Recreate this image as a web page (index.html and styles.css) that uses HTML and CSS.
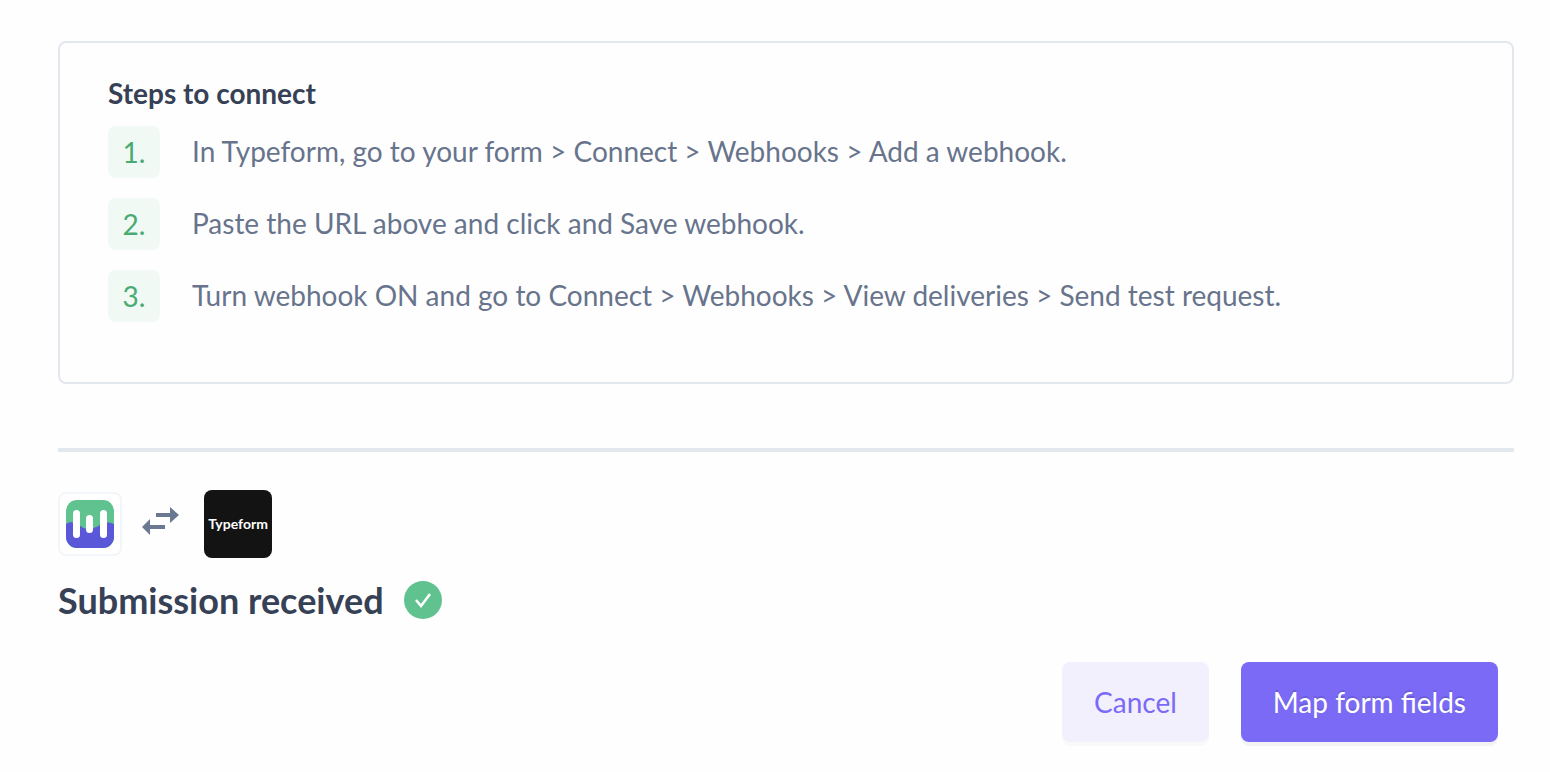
FILE: index.html
```html
<!DOCTYPE html>
<html lang="en">
<head>
	<meta charset="UTF-8">
	<meta name="viewport" content="width=device-width, initial-scale=1.0">
	<title>Connect Typeform</title>
	<link rel="stylesheet" href="styles.css">
</head>
<body>
	<main class="connect">
		<section class="card">
			<h2>Steps to connect</h2>
			<ol class="steps">
				<li><span class="num">1.</span><p>In Typeform, go to your form &gt; Connect &gt; Webhooks &gt; Add a webhook.</p></li>
				<li><span class="num">2.</span><p>Paste the URL above and click and Save webhook.</p></li>
				<li><span class="num">3.</span><p>Turn webhook ON and go to Connect &gt; Webhooks &gt; View deliveries &gt; Send test request.</p></li>
			</ol>
		</section>
		<hr>
		<div class="apps">
			<div class="app">
				<svg width="48" height="48" viewBox="0 0 48 48">
					<clipPath id="logoClip"><rect width="48" height="48" rx="11"/></clipPath>
					<g clip-path="url(#logoClip)">
						<rect width="48" height="48" fill="#5fc28f"/>
						<path d="M0 24C3 22 6 22 9 23C14 25 17 29 22 29C30 29 34 24 39 23C42 22 45 23 48 24V48H0Z" fill="#5a57d9"/>
					</g>
					<g fill="#fff">
						<rect x="7" y="10" width="7" height="28" rx="3.5"/>
						<rect x="20" y="15" width="7" height="18" rx="3.5"/>
						<rect x="34" y="10" width="7" height="28" rx="3.5"/>
					</g>
				</svg>
			</div>
			<svg class="swap" width="38" height="34" viewBox="0 0 38 34" fill="#6b7891">
				<path d="M14 6H28V0L37 8L28 16V10H14Z"/>
				<path d="M23 18H8V12L0 20L8 28V22H23Z"/>
			</svg>
			<div class="app typeform">Typeform</div>
		</div>
		<div class="status">
			<h1>Submission received</h1>
			<svg width="38" height="38" viewBox="0 0 38 38">
				<circle cx="19" cy="19" r="19" fill="#5fc28f"/>
				<path d="M12 19L17 25L26 13" fill="none" stroke="#fff" stroke-width="2.6"/>
			</svg>
		</div>
		<div class="actions">
			<button type="button" class="btn">Cancel</button>
			<button type="button" class="btn primary">Map form fields</button>
		</div>
	</main>
</body>
</html>
```

FILE: styles.css
```css
* {box-sizing:border-box;}
body {margin:0; background-color:#fefefe; color:#67748c; font-family:Lato, "Liberation Sans", sans-serif; font-size:28px; line-height:34px;}
h1, h2, p, ol {margin:0; padding:0;}
h1, h2 {color:#364156; font-weight:700;}
h1 {font-size:36px; line-height:44px;}
h2 {font-size:28px; line-height:34px;}
svg {display:block; flex:none;}
.connect {padding:41px 36px 24px 58px;}

.card {padding:33px 48px 60px; border:2px solid #e3e7ee; border-radius:8px;}
.steps {display:flex; flex-direction:column; gap:20px; margin-top:16px; list-style:none;}
.steps li {display:flex; align-items:center; gap:32px;}
.steps p {padding-bottom:2px;}
.num {display:flex; flex:none; justify-content:center; align-items:center; width:52px; height:52px; border-radius:8px; background-color:#f1f9f5; color:#48ab72;}
hr {height:4px; margin:64px 0 38px; border:none; background-color:#e3e7ee;}

.apps {display:flex; align-items:center;}
.app {display:flex; justify-content:center; align-items:center; width:64px; height:64px; border:2px solid #f2f5fa; border-radius:8px; background-color:#fff;}
.swap {margin:0 24px 0 20px;}
.typeform {width:68px; height:68px; border:none; background-color:#131313; color:#fff; font-size:14px; font-weight:700;}
.status {display:flex; align-items:center; gap:20px; margin-top:20px;}

.actions {display:flex; justify-content:flex-end; gap:32px; margin-top:40px; padding-right:16px;}
.btn {height:80px; padding:0 32px; border:none; border-radius:8px; background-color:#f2f0fd; box-shadow:0 4px 0 rgba(0, 0, 0, .02); color:#7a6af6; font:inherit; cursor:pointer;}
.btn.primary {background-color:#7a6af6; box-shadow:0 4px 0 rgba(0, 0, 0, .045); color:#fff; text-shadow:0 -2px 0 rgba(0, 0, 0, .12);}
```
